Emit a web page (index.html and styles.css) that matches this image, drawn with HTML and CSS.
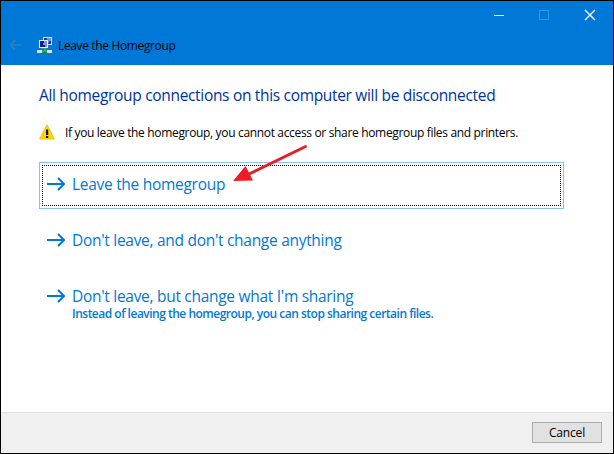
FILE: index.html
```html
<!DOCTYPE html>
<html lang="en">
<head>
<meta charset="utf-8">
<title>Leave the Homegroup</title>
<link rel="stylesheet" href="styles.css">
</head>
<body>
<div class="window">
  <header class="titlebar">
    <div class="controls">
      <svg class="ctl" viewBox="0 0 46 29" shape-rendering="crispEdges"><path d="M18 14.500h10" stroke="#fff"/></svg>
      <svg class="ctl" viewBox="0 0 46 29" shape-rendering="crispEdges"><path d="M18.500 9.500h9v9h-9z" fill="none" stroke="#3393df"/></svg>
      <svg class="ctl" viewBox="0 0 46 29"><path d="M18.500 9.500l9 9m0-9l-9 9" stroke="#fff" stroke-width="1.400" stroke-linecap="square"/></svg>
    </div>
    <div class="caption">
      <svg class="back" viewBox="0 0 13 12"><path d="M12 6H1.500M6.300 1.200L1.500 6l4.800 4.800" fill="none" stroke="#337fb9" stroke-width="1.700"/></svg>
      <svg class="network" viewBox="0 0 16 16">
        <g shape-rendering="crispEdges">
        <path d="M6 0h9v8H6z" fill="#dce4ee"/><path d="M7 1h7v6H7z" fill="#1238ae"/><path d="M10 1h4v3h-2v2h-2z" fill="#6b92e8"/>
        <path d="M2 3h9v8H2z" fill="#f2f2ee"/><path d="M3 4h7v6H3z" fill="#101aa3"/><path d="M7 4h3v6H8V8H6V6h1z" fill="#7895e7"/>
        <path d="M4 11h6v1H4z" fill="#65798e"/><path d="M7 11h2v2H7z" fill="#21b16a"/>
        <path d="M0 13h15v3H0z" fill="#d5e1e3"/><path d="M5 13h5v3H5z" fill="#16b565"/><path d="M5 15h5v1H5z" fill="#168551"/>
        </g>
      </svg>
      <span class="title">Leave the Homegroup</span>
    </div>
  </header>
  <main class="content">
    <h1>All homegroup connections on this computer will be disconnected</h1>
    <div class="warning">
      <svg class="warn-icon" viewBox="0 0 16 16"><path d="M8 .7L15.400 15H.6z" fill="#ffd500" stroke="#f3c31c" stroke-linejoin="round"/><path d="M7 5.500h2.200V11H7zM7 12h2.200v2H7z" fill="#18130a"/></svg>
      <span>If you leave the homegroup, you cannot access or share homegroup files and printers.</span>
    </div>
    <div class="option selected">
      <svg class="focus" viewBox="0 0 519 41" shape-rendering="crispEdges"><path d="M0 .5h519M0 40.500h519M.5 0v41M518.500 0v41" stroke="#000" stroke-dasharray="1 1"/></svg>
      <svg class="arrow" viewBox="0 0 18 14"><path d="M0 7h17M11 1l6 6-6 6" fill="none" stroke="#0078d7" stroke-width="2"/></svg>
      <span class="label l1">Leave the homegroup</span>
      <svg class="pointer" viewBox="0 0 76 40"><path d="M72.500 5.500L14 34" stroke="#ed1c24" stroke-width="2.800" stroke-linecap="round"/><path d="M0 40L12.500 25 20 39.500z" fill="#ed1c24"/></svg>
    </div>
    <div class="option">
      <svg class="arrow" viewBox="0 0 18 14"><path d="M0 7h17M11 1l6 6-6 6" fill="none" stroke="#0078d7" stroke-width="2"/></svg>
      <span class="label">Don't leave, and don't change anything</span>
    </div>
    <div class="option">
      <svg class="arrow" viewBox="0 0 18 14"><path d="M0 7h17M11 1l6 6-6 6" fill="none" stroke="#0078d7" stroke-width="2"/></svg>
      <span class="label">Don't leave, but change what I'm sharing</span>
      <span class="note">Instead of leaving the homegroup, you can stop sharing certain files.</span>
    </div>
  </main>
  <footer class="footer"><button class="cancel">Cancel</button></footer>
</div>
</body>
</html>
```
FILE: styles.css
```css
* { box-sizing: border-box; }
body { margin: 0; font-family: "Open Sans", "Noto Sans", sans-serif; font-size: 12px; color: #000; }
svg { display: block; flex: none; }
.window { width: 614px; height: 454px; border: 1px solid #000; background: #fff; display: flex; flex-direction: column; }
.titlebar { height: 64px; background: #0078d7; }
.controls { display: flex; justify-content: flex-end; height: 29px; }
.ctl { width: 46px; height: 29px; }
.ctl:first-child { margin-right: -1px; }
.caption { display: flex; align-items: center; height: 30px; padding-left: 8px; }
.back { width: 13px; height: 12px; }
.network { width: 16px; height: 16px; margin-left: 15px; }
.title { margin: 2px 0 0 5px; letter-spacing: -.36px; line-height: 16px; white-space: nowrap; }
.content { flex: 1; padding: 18px 49px 0 38px; }
h1 { margin: 0; height: 24px; line-height: 24px; font-size: 15.5px; font-weight: 400; color: #003399; white-space: nowrap; letter-spacing: -.32px; }
.warning { display: flex; align-items: center; height: 18px; margin-top: 16px; white-space: nowrap; letter-spacing: -.335px; }
.warn-icon { width: 16px; height: 16px; margin-right: 10px; }
.option { position: relative; display: grid; grid-template-columns: 25px 1fr; align-items: center; height: 47px; margin-bottom: 9px; padding: 10px 7px 0; border: 1px solid transparent; align-content: start; color: #0078d7; white-space: nowrap; }
.selected { margin-top: 21px; border-color: #8ac0ed; }
.arrow { width: 18px; height: 14px; }
.label { font-size: 15.5px; line-height: 22px; letter-spacing: -.29px; }
.note { grid-column: 2; margin-top: -1px; font-weight: 600; line-height: 15px; letter-spacing: -.5px; }
.focus { position: absolute; left: 2px; top: 2px; width: 519px; height: 41px; }
.pointer { position: absolute; left: 193px; top: -22px; width: 76px; height: 40px; }
.footer { height: 41px; background: #f0f0f0; border-top: 1px solid #dfdfdf; display: flex; justify-content: flex-end; padding: 9px 11px 0 0; }
.cancel { width: 70px; height: 21px; padding: 0; border: 1px solid #adadad; background: #e1e1e1; font: inherit; line-height: 18px; letter-spacing: -.15px; color: #000; }
```
